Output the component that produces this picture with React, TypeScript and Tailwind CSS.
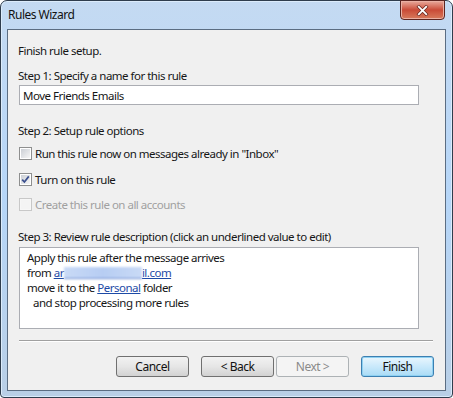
import React from "react";

const font = "font-['Noto_Sans',sans-serif] tracking-[-0.5px]";

function Checkbox({ checked, disabled }: { checked?: boolean; disabled?: boolean }) {
  return (
    <div
      className={`ml-[1px] w-[13px] h-[13px] shrink-0 border flex items-center justify-center ${
        disabled ? "border-[#c8c8c8] bg-[#f7f7f7]" : "border-[#8e8f8f] bg-white"
      }`}
    >
      <div
        className={`w-[9px] h-[9px] relative ${
          disabled ? "bg-[#f4f4f4]" : "bg-gradient-to-br from-[#cbcfd5] to-[#f6f6f6]"
        }`}
      >
        {checked && (
          <svg viewBox="0 0 9 9" className="absolute left-[0px] top-[0px] w-[9px] h-[9px]">
            <path d="M1.2 4.6 L3.4 7 L7.8 1.4" fill="none" stroke="#3a4f8e" strokeWidth="1.7" />
          </svg>
        )}
      </div>
    </div>
  );
}

function Button({ label, variant }: { label: string; variant?: "default" | "disabled" }) {
  let cls =
    "border-[#707070] bg-gradient-to-b from-[#f2f2f2] via-[#e6e6e6] to-[#d2d2d2] text-[#111]";
  if (variant === "default")
    cls = "border-[#3c7fb1] bg-gradient-to-b from-[#eaf6fd] via-[#c9e9fb] to-[#a9dbf6] text-[#111] shadow-[inset_0_0_0_1px_#8fd1f2]";
  if (variant === "disabled") cls = "border-[#adb2b5] bg-[#f4f4f4] text-[#8a8a8a]";
  return (
    <div
      className={`w-[73px] h-[21px] rounded-[3px] border flex items-center justify-center text-[12px] leading-[15px] ${cls}`}
    >
      {label}
    </div>
  );
}

export default function App() {
  return (
    <div className={`w-[453px] h-[398px] bg-white ${font}`}>
      <div className="relative w-[453px] h-[398px] rounded-t-[7px] rounded-b-[4px] border border-[#2f3d4d] bg-gradient-to-b from-[#c4daf2] via-[#b6d6f8] to-[#b9cfe6] flex flex-col px-[6px] pb-[6px] shadow-[inset_0_0_0_1px_#dcecfb]">
        <div className="h-[28px] shrink-0 flex items-center pl-[1px] pb-[1px] text-[12px] text-[#111]">
          Rules Wizard
        </div>
        <div className="absolute top-[-1px] right-[7px] w-[45px] h-[20px] rounded-b-[4px] border border-[#5d2520] bg-gradient-to-b from-[#e7a99c] via-[#c94a37] to-[#d77a5c] flex items-center justify-center shadow-[inset_0_0_0_1px_#eab0a3]">
          <svg viewBox="0 0 14 12" className="w-[13px] h-[11px]">
            <path d="M3 2 L11 10 M11 2 L3 10" stroke="#6b2a22" strokeWidth="3.6" strokeLinecap="square" />
            <path d="M3 2 L11 10 M11 2 L3 10" stroke="#ffffff" strokeWidth="2" strokeLinecap="square" />
          </svg>
        </div>
        <div className="flex-1 border border-[#5b6d82] bg-[#f0f0f0] flex flex-col pl-[10px] pr-[11px] text-[11.5px] leading-[15px] text-[#161616]">
          <div className="mt-[13px]">Finish rule setup.</div>
          <div className="mt-[10px]">Step 1: Specify a name for this rule</div>
          <div className="mt-[2px] ml-[1px] w-[400px] h-[20px] border border-[#abadb3] bg-white flex items-center pl-[3px]">
            Move Friends Emails
          </div>
          <div className="mt-[18px]">Step 2: Setup rule options</div>
          <div className="mt-[8px] flex items-center gap-[3px] h-[15px]">
            <Checkbox />
            <span>Run this rule now on messages already in "Inbox"</span>
          </div>
          <div className="mt-[11px] flex items-center gap-[3px] h-[15px]">
            <Checkbox checked />
            <span>Turn on this rule</span>
          </div>
          <div className="mt-[10px] flex items-center gap-[3px] h-[15px] text-[#a0a0a0]">
            <Checkbox disabled />
            <span>Create this rule on all accounts</span>
          </div>
          <div className="mt-[17px]">Step 3: Review rule description (click an underlined value to edit)</div>
          <div className="mt-[3px] ml-[1px] w-[400px] h-[82px] border border-[#abadb3] bg-white flex flex-col pl-[7px] pt-[2px]">
            <div>Apply this rule after the message arrives</div>
            <div className="flex items-baseline whitespace-pre">
              <span>from </span>
              <span className="text-[#1d4aa6] underline">ar</span>
              <span className="inline-block w-[78px] h-[12px] self-center bg-gradient-to-r from-[#c9daf6] via-[#b7cdf3] to-[#c9daf6] blur-[1px] border-b border-[#6b8bd0]" />
              <span className="text-[#1d4aa6] underline">il.com</span>
            </div>
            <div className="whitespace-pre">
              move it to the <span className="text-[#1d4aa6] underline">Personal</span> folder
            </div>
            <div className="pl-[6px]">and stop processing more rules</div>
          </div>
          <div className="mt-[11px] ml-[1px] w-[414px] h-[2px] border-t border-[#a0a0a0] border-b-white border-b" />
          <div className="mt-[14px] flex justify-end">
            <Button label="Cancel" />
            <div className="ml-[12px]">
              <Button label="< Back" />
            </div>
            <div className="ml-[2px]">
              <Button label="Next >" variant="disabled" />
            </div>
            <div className="ml-[12px]">
              <Button label="Finish" variant="default" />
            </div>
          </div>
        </div>
      </div>
    </div>
  );
}
